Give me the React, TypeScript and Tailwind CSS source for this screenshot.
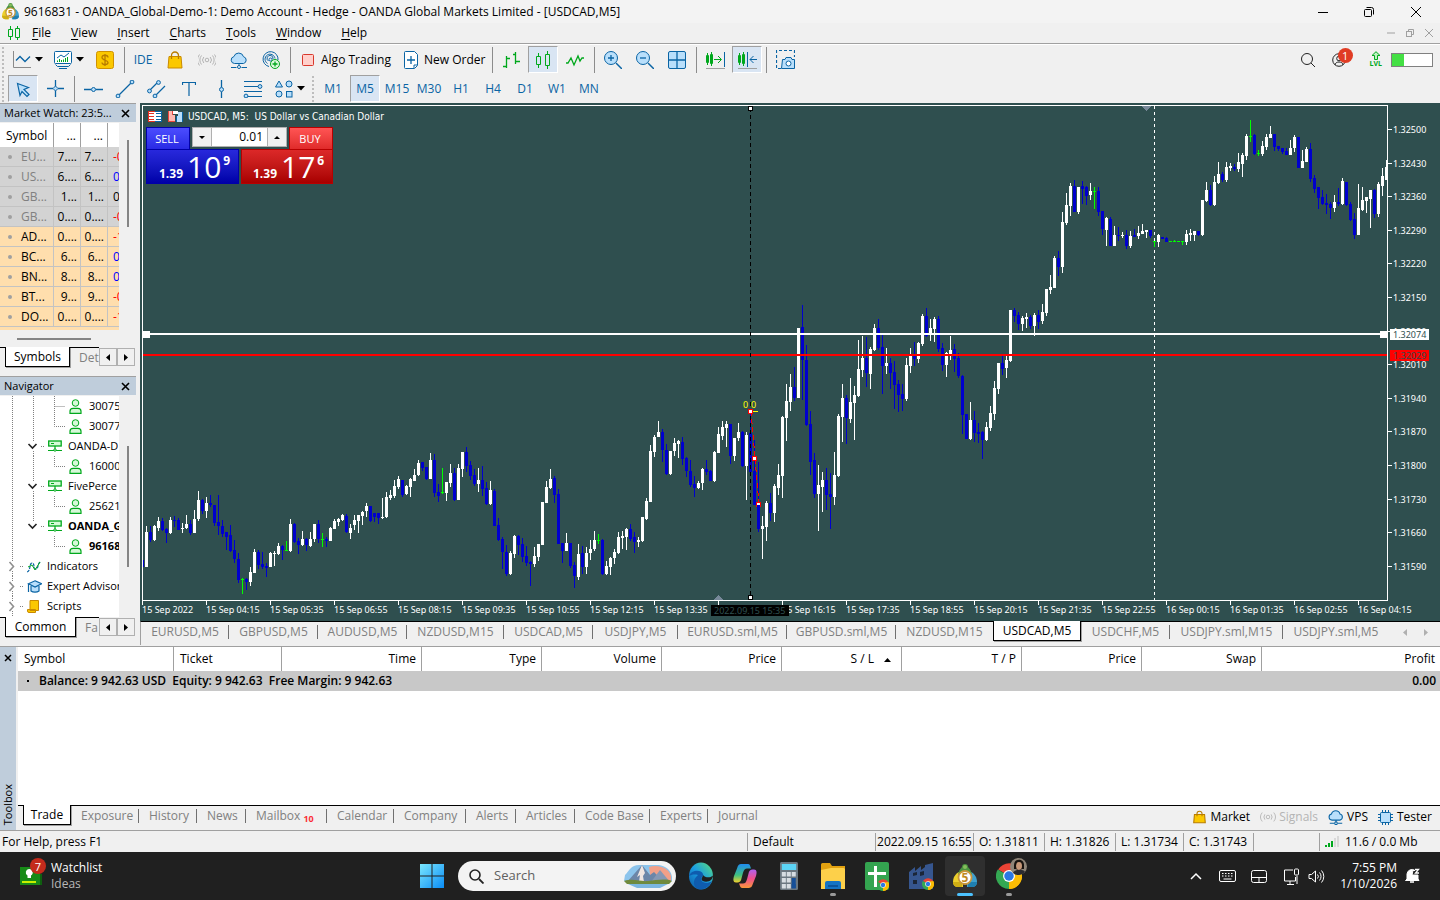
import type { ReactNode } from "react";

const BLUE = "#0a64a4";
const SKY = "#b9dffb";
const GREEN = "#00a81c";
const GRAY = "#8a8a8a";

/* Candles: colour (w up, b down, g doji), then high, body top, body bottom, low */
const CANDLES = `
b560,560,567,567 w526,532,567,567 b526,532,540,542 w525,526,540,541 w517,521,528,531 b518,521,530,531 b528,529,533,543 w517,520,533,534
b516,520,521,527 b518,520,530,530 w523,528,529,533 w515,524,528,529 b520,524,533,535 w510,519,533,533 w491,500,519,521 b499,500,511,514
w497,503,511,518 b495,503,505,507 b505,505,523,526 b495,522,526,535 b520,526,534,537 b532,532,537,550 b525,535,551,552 b540,550,559,563
b553,559,580,583 g578,579,579,594 b578,579,582,590 w567,572,582,586 w549,552,573,573 b550,552,565,569 b552,564,567,569 b563,566,568,577
w552,553,567,567 w551,553,554,566 w543,546,554,555 b545,546,550,560 g541,550,550,551 w519,524,551,552 b523,524,542,543 b538,541,545,554
w531,539,545,546 b538,539,545,551 w532,539,546,547 w524,524,539,542 b520,524,539,543 g533,539,539,547 b537,539,541,547 w527,528,541,541
w519,521,529,529 w518,519,522,526 w514,515,520,521 b514,516,532,533 w524,528,533,539 w515,520,525,530 w515,515,521,533 w511,512,516,525
w503,506,511,517 b506,506,521,522 b513,513,517,522 b513,513,518,524 w498,517,518,519 w492,497,517,518 w490,495,498,500 w480,486,496,498
w476,479,487,489 b480,480,495,497 w485,486,494,495 w478,479,487,497 w469,475,481,481 w460,463,475,476 b462,462,468,471 b467,467,479,480
w453,460,479,479 b454,460,493,497 b484,492,496,502 g468,492,492,494 w482,482,493,501 w464,473,483,487 b468,473,500,501 w464,468,500,500
w452,452,469,477 b447,452,466,472 b461,465,476,480 b469,475,484,486 w468,480,484,492 b466,480,489,496 b482,488,504,505 w481,490,504,505
b489,491,526,526 b518,525,540,541 b537,539,552,569 b545,552,574,576 w551,553,574,575 w535,536,554,558 b535,536,545,555 b538,544,557,562
b546,556,563,566 b561,562,564,586 w547,556,564,567 w544,544,557,561 w502,502,545,545 w481,487,503,503 w469,479,488,489 b476,478,495,503
b489,494,544,544 b543,543,551,563 w533,543,551,551 b543,543,566,568 b562,565,576,588 w544,554,577,580 b546,553,567,574 w547,553,567,574
w540,549,553,560 w531,540,549,551 g534,540,540,544 b539,540,574,575 w561,566,574,575 w557,558,567,575 w549,552,558,564 w532,537,553,554
w531,536,538,549 w528,529,537,550 b524,529,539,541 b532,537,542,553 w537,540,542,547 w517,517,541,542 w498,501,519,520 w445,451,502,502
w435,437,452,457 w421,432,437,437 b429,432,450,462 b444,450,474,475 w451,451,474,475 w438,443,451,456 w440,441,444,458 b437,442,459,465
b457,458,471,477 b460,471,485,487 b476,484,488,497 w481,483,488,489 w468,469,483,490 b460,469,472,475 b470,471,481,481 w451,452,481,482
w427,434,453,453 w421,427,436,440 w421,424,428,447 b424,424,456,464 w438,438,456,461 w423,432,438,441 b431,432,466,467 w432,435,466,500
b413,433,472,472 b440,471,505,505 b462,504,529,532 w516,526,529,559 w501,503,527,541 b493,503,513,521 w484,486,513,522 w464,475,488,495
w416,417,476,498 w384,401,418,441 w374,387,402,411 b367,387,398,401 w328,328,398,398 b305,327,360,400 b345,360,425,426 b411,424,462,475
b453,460,494,498 w465,485,494,531 w472,480,487,512 b468,480,495,510 b473,494,497,529 w452,475,497,505 w414,416,476,477 w384,398,417,442
b395,398,418,444 w378,402,419,423 w386,395,403,440 w340,369,396,397 w336,358,370,377 b337,358,373,387 w347,349,374,389 w324,328,350,351
b319,328,348,350 b335,347,366,394 w348,363,366,374 b358,363,373,389 b361,372,385,409 b380,384,395,412 b384,394,399,411 w358,365,399,401
w348,355,366,373 b342,355,359,366 w342,343,359,363 w314,316,344,346 b308,316,336,337 w319,328,335,341 w317,319,329,342 b316,319,349,352
b343,348,365,371 w352,353,365,377 w336,350,354,360 b344,349,359,372 b353,358,376,378 b375,376,415,434 b414,414,439,439 w402,420,439,440
b411,420,433,442 b423,432,434,443 b431,432,440,459 w422,427,440,441 w406,413,428,431 w381,388,414,420 w363,363,389,394 b356,363,369,375
w356,360,368,378 w310,310,361,362 b308,310,316,322 b312,315,324,330 w316,318,324,331 w313,317,319,328 b315,317,326,329 w313,315,326,336
b310,315,322,329 w304,312,321,324 w289,289,313,316 w275,287,290,294 w256,258,288,288 b251,258,267,276 w212,222,267,273 w193,205,223,225
w183,186,206,216 b180,186,212,212 w187,187,212,214 b181,186,189,204 b186,187,196,205 w183,191,195,200 g187,191,191,209 b187,191,212,216
b211,211,229,235 w217,218,230,246 b217,219,246,246 w226,235,246,246 b227,235,236,241 w232,235,236,238 b230,235,246,249 w231,236,246,248
b229,235,237,237 w226,233,236,239 w224,231,234,234 w230,230,232,238 b230,230,236,238 g241,241,241,247 w234,235,242,247 b237,237,239,239
b237,238,242,242 g241,241,241,242 g240,241,241,242 g241,241,241,242 g241,241,241,245 w230,234,242,245 w229,233,235,241 w231,231,235,241
b231,231,235,236 w200,200,235,236 w182,190,201,202 b185,190,205,206 w176,182,205,206 w162,174,183,184 b172,174,180,182 w162,167,180,182
w163,166,168,171 b164,167,169,171 w153,162,169,172 w153,155,164,177 w134,136,156,160 g120,136,136,142 b134,135,154,155 g150,153,153,156
w141,146,154,156 w134,137,147,150 w126,134,138,138 b134,134,147,151 b146,146,149,151 b148,148,152,154 b148,151,155,155 w140,148,155,155
w135,137,148,152 b137,137,168,168 w150,161,168,168 w147,149,162,162 b143,149,179,182 b175,178,189,193 b187,187,198,209 b190,197,204,205
b194,203,205,214 b202,204,208,219 w195,202,208,212 b188,202,204,206 w178,181,204,205 b182,182,205,206 b202,204,220,221 b213,219,235,239
w184,208,235,235 w187,200,210,211 w197,197,201,213 w190,190,199,228 b189,190,214,218 w182,184,214,217 w168,176,186,196 w160,167,180,180
`.trim().split(/\s+/).map(s => ({ kind: s[0], y: s.slice(1).split(",").map(Number) }));

const FILLS: Record<string, string> = { w: "#ffffff", b: "#0000cd", g: "#00ff00" };

// the empty slot sits under the crosshair date box
const TIMES = [
  "15 Sep 2022", "15 Sep 04:15", "15 Sep 05:35", "15 Sep 06:55", "15 Sep 08:15", "15 Sep 09:35", "15 Sep 10:55",
  "15 Sep 12:15", "15 Sep 13:35", "", "15 Sep 16:15", "15 Sep 17:35", "15 Sep 18:55", "15 Sep 20:15",
  "15 Sep 21:35", "15 Sep 22:55", "16 Sep 00:15", "16 Sep 01:35", "16 Sep 02:55", "16 Sep 04:15",
];
const PRICES = [
  "1.32500", "1.32430", "1.32360", "1.32290", "1.32220", "1.32150", "1.32080",
  "1.32010", "1.31940", "1.31870", "1.31800", "1.31730", "1.31660", "1.31590",
];

const CHART_TABS = [
  { label: "EURUSD,M5", w: "w-[88px]" }, { label: "GBPUSD,M5", w: "w-[89px]" }, { label: "AUDUSD,M5", w: "w-[89px]" },
  { label: "NZDUSD,M15", w: "w-[97px]" }, { label: "USDCAD,M5", w: "w-[89px]" }, { label: "USDJPY,M5", w: "w-[85px]" },
  { label: "EURUSD.sml,M5", w: "w-[109px]" }, { label: "GBPUSD.sml,M5", w: "w-[109px]" }, { label: "NZDUSD,M15", w: "w-[97px]" },
  { label: "USDCAD,M5", w: "w-[88px]", active: true }, { label: "USDCHF,M5", w: "w-[89px]" },
  { label: "USDJPY.sml,M15", w: "w-[113px]" }, { label: "USDJPY.sml,M5", w: "w-[106px]" },
];

const TOOLBOX_TABS = [
  { label: "Exposure", w: "w-[68px]" }, { label: "History", w: "w-[58px]" }, { label: "News", w: "w-[49px]" },
  { label: "Mailbox", w: "w-[81px]", count: 10 }, { label: "Calendar", w: "w-[67px]" }, { label: "Company", w: "w-[72px]" },
  { label: "Alerts", w: "w-[50px]" }, { label: "Articles", w: "w-[59px]" }, { label: "Code Base", w: "w-[75px]" },
  { label: "Experts", w: "w-[58px]" }, { label: "Journal", w: "w-[58px]" },
];

const QUOTES = [
  { s: "EU...", b: "7....", a: "7....", d: "-0", tone: "text-[#ff0000]", dim: true },
  { s: "US...", b: "6....", a: "6....", d: "0", tone: "text-[#0000ff]", dim: true },
  { s: "GB...", b: "1...", a: "1...", d: "0", tone: "text-black", dim: true },
  { s: "GB...", b: "0....", a: "0....", d: "-0", tone: "text-[#ff0000]", dim: true },
  { s: "AD...", b: "0....", a: "0....", d: "-1", tone: "text-[#ff0000]" },
  { s: "BC...", b: "6...", a: "6...", d: "0", tone: "text-[#0000ff]" },
  { s: "BN...", b: "8...", a: "8...", d: "0", tone: "text-[#0000ff]" },
  { s: "BT...", b: "9...", a: "9...", d: "-0", tone: "text-[#ff0000]" },
  { s: "DO...", b: "0....", a: "0....", d: "-1", tone: "text-[#ff0000]" },
];

function Svg({ w = 18, h = 18, children, stroke = BLUE, fill = "none" }: { w?: number; h?: number; children: ReactNode; stroke?: string; fill?: string }) {
  return (
    <svg width={w} height={h} viewBox={`0 0 ${w} ${h}`} fill={fill} stroke={stroke} strokeWidth={1} className="shrink-0" aria-hidden="true">
      {children}
    </svg>
  );
}

const Bag = () => (
  <Svg stroke="#c98a00">
    <path d="M3 5.5h12l1 11.5H2z" fill="#fbc800" />
    <path d="M5.5 8V4.5a3.5 3.5 0 0 1 7 0V8" stroke="#b87c00" strokeWidth={1.3} />
  </Svg>
);
const Signal = () => (
  <Svg stroke="#b4b4b4">
    <circle cx="9" cy="9" r="1.8" />
    <path d="M5.8 6a4.5 4.5 0 0 0 0 6M12.2 6a4.5 4.5 0 0 1 0 6M3.5 4.5a7 7 0 0 0 0 9M14.5 4.5a7 7 0 0 1 0 9M1.500 3.500a9 9 0 0 0 0 11M16.500 3.500a9 9 0 0 1 0 11" />
  </Svg>
);
const Cloud = () => (
  <Svg>
    <path d="M4.5 12.500a3.500 3.500 0 0 1-.6-6.900 5 5 0 0 1 9.600.1 3.500 3.500 0 0 1 0 6.800z" fill={SKY} />
    <path d="M9 12.500v2M1 16.500h5.500M11.500 16.500H17" />
    <circle cx="9" cy="16" r="1.500" fill="#fff" />
  </Svg>
);
const Caret = () => (
  <svg width="8" height="5" viewBox="0 0 8 5" className="shrink-0" aria-hidden="true"><path d="M0 0h8L4 4.500z" fill="#000" /></svg>
);
const Sep = () => <div className="flex h-[26px] w-[6px] shrink-0 justify-center"><div className="w-px bg-[#8c8c8c]" /></div>;
const Grip = () => <div className="mx-[3px] h-[26px] w-[2px] shrink-0 border-l-2 border-dotted border-[#bdbdbd]" />;

function Tool({ label, on, children }: { label: string; on?: boolean; children: ReactNode }) {
  return (
    <button type="button" aria-label={label} className="flex h-[28px] w-8 shrink-0 items-center justify-center text-[12px] text-[#0a64a4]">
      {on ? (
        <span className="flex h-[27px] w-[30px] items-center justify-center border border-b-white border-l-[#a0a0a0] border-r-white border-t-[#a0a0a0] bg-[#d9e5f3]">{children}</span>
      ) : children}
    </button>
  );
}

function Logo({ size }: { size: number }) {
  return (
    <svg width={size} height={size} viewBox="0 0 24 24" className="shrink-0" aria-hidden="true">
      <path d="M6 8c-4 2-6 6-6 10 0 3 2 5 5 5h5V9z" fill="#ecd02c" />
      <path d="M0 18h9v5H5c-3 0-5-2-5-5z" fill="#cfae14" />
      <path d="M18 8c4 2 6 6 6 10 0 3-2 5-5 5h-5V9z" fill="#3fa0cc" />
      <path d="M24 18h-9v5h4c3 0 5-2 5-5z" fill="#1f7fb0" />
      <path d="M12 0c2 0 3 1 3 3 2 2 4 5 4 9H5c0-4 2-7 4-9 0-2 1-3 3-3z" fill="#4a9440" />
      <circle cx="12" cy="3" r="2" fill="#86bd5c" />
      <circle cx="12" cy="13.500" r="6.500" fill="#fff" stroke="#c9973a" strokeWidth="1.800" />
      <text x="12" y="18" fontSize="12" fontWeight="700" textAnchor="middle" fill="#c08a1e">5</text>
    </svg>
  );
}

function TitleBar() {
  return (
    <header className="flex h-[23px] items-center bg-[#f3f3f3] pl-[2px] text-[12px]">
      <Logo size={17} />
      <h1 className="ml-[5px] flex-1 whitespace-nowrap font-normal">9616831 - OANDA_Global-Demo-1: Demo Account - Hedge - OANDA Global Markets Limited - [USDCAD,M5]</h1>
      <div className="flex">
        <button type="button" aria-label="Minimize" className="flex w-[46px] justify-center"><Svg w={12} h={12} stroke="#000"><path d="M1 6.500h10" /></Svg></button>
        <button type="button" aria-label="Restore" className="flex w-[46px] justify-center"><Svg w={12} h={12} stroke="#000"><rect x="1.500" y="3.500" width="7" height="7" rx="1" /><path d="M3.500 1.500h5a2 2 0 0 1 2 2v5" /></Svg></button>
        <button type="button" aria-label="Close" className="flex w-[48px] justify-center"><Svg w={12} h={12} stroke="#000"><path d="M1 1l10 10M11 1L1 11" /></Svg></button>
      </div>
    </header>
  );
}

function MenuBar() {
  return (
    <nav className="flex h-[21px] items-center border-b border-[#a0a0a0] pl-[8px] pr-[6px] text-[12px]">
      <Svg w={12} h={14} stroke={GREEN}><path d="M2.500 0v3M.500 3.500h4v7h-4zM2.500 11v3M9.500 0v2M7.500 2.500h4v9h-4zM9.500 12v2" /></Svg>
      <div className="ml-[12px] flex flex-1 gap-[20px]">
        {["File", "View", "Insert", "Charts", "Tools", "Window", "Help"].map(m => (
          <button key={m} type="button"><span className="underline underline-offset-2">{m[0]}</span>{m.slice(1)}</button>
        ))}
      </div>
      <div className="flex gap-[9px]">
        <button type="button" aria-label="Minimize chart"><Svg w={10} h={10} stroke="#a0a0a0"><path d="M1 5h8" /></Svg></button>
        <button type="button" aria-label="Restore chart"><Svg w={10} h={10} stroke="#a0a0a0"><rect x="1.500" y="3.500" width="5" height="5" /><path d="M3.500 3V1.500h5v5H7" /></Svg></button>
        <button type="button" aria-label="Close chart"><Svg w={10} h={10} stroke="#a0a0a0"><path d="M1 1l8 8M9 1L1 9" /></Svg></button>
      </div>
    </nav>
  );
}

function MainToolbar() {
  return (
    <div className="flex h-[30px] items-center border-t border-white text-[12px]">
      <div className="w-[6px]"><div className="ml-[2px] h-[26px] w-[2px] border-l-2 border-dotted border-[#bdbdbd]" /></div>
      <button type="button" aria-label="New chart" className="flex w-[41px] items-center gap-[4px] pl-[7px]">
        <Svg><path d="M.500 0v16.500H18" stroke={GRAY} /><path d="M3 9.500l4-4 5 5 5-5" strokeWidth={1.3} /></Svg><Caret />
      </button>
      <button type="button" aria-label="Profiles" className="flex w-[41px] items-center gap-[4px] pl-[7px]">
        <Svg><rect x=".500" y=".500" width="17" height="12" rx="1" fill="#fff" /><path d="M1.500 13.500l2 2h11l2-2M5 17.500h8M3 7l4-3 3 2 5-4" /><path d="M3.500 11V9.500M5.500 11V8M7.500 11V9M9.500 11V8.500M11.500 11V7M13.500 11V6" stroke={GREEN} /></Svg><Caret />
      </button>
      <div className="flex w-[33px] justify-center">
        <button type="button" aria-label="Quotes"><Svg stroke="#d09200"><rect x=".500" y=".500" width="17" height="17" rx="2" fill="#fbc800" /><path d="M12 6.500C12 3.500 6 3.500 6 6.500S12 9 12 11.500 6 14.500 6 11.500M9 3v12" stroke="#b87c00" strokeWidth={1.3} /></Svg></button>
      </div>
      <Sep />
      <Tool label="IDE">IDE</Tool>
      <Tool label="Market"><Bag /></Tool>
      <Tool label="Signals"><Signal /></Tool>
      <Tool label="VPS"><Cloud /></Tool>
      <Tool label="Copy trading">
        <Svg><path d="M7 15.500A7.500 7.500 0 1 1 16 9M5.500 12.500a5 5 0 1 1 7.500-5M6.500 10a3 3 0 1 1 4.500-2" /><circle cx="8.500" cy="8.500" r="1.500" /><circle cx="13" cy="13" r="4.500" fill="#dff8df" stroke={GREEN} /><path d="M13 10.500v5M10.500 13h5" stroke={GREEN} strokeWidth={1.3} /></Svg>
      </Tool>
      <Sep />
      <button type="button" className="flex w-[103px] items-center gap-[7px] whitespace-nowrap pl-[9px]">
        <Svg w={12} h={12} stroke="#d8382c"><rect x=".500" y=".500" width="11" height="11" rx="1" fill="#ffd0cb" /></Svg>Algo Trading
      </button>
      <button type="button" className="flex w-[93px] items-center gap-[6px] whitespace-nowrap pl-[8px]">
        <Svg w={14}><path d="M1.500.500h9l3 3v11l-3 3h-9a1 1 0 0 1-1-1v-15a1 1 0 0 1 1-1zM10 17v-3h3" fill="#fff" /><path d="M7 5v8M3 9h8" strokeWidth={1.3} /></Svg>New Order
      </button>
      <Sep />
      <Tool label="Bar chart"><Svg stroke={GREEN}><path d="M4.500 5v12M1 15.500h3M5 7.500h3M13.500 1v12M11 3.500h3M14 10.500h4" strokeWidth={1.3} /></Svg></Tool>
      <Tool label="Candlesticks" on><Svg w={16} stroke={GREEN}><path d="M3.500 2v3M1.500 5.500h4v8h-4zM3.500 14v3M12.500 0v3M10.500 3.500h4v11h-4zM12.500 15v3" /></Svg></Tool>
      <Tool label="Line chart"><Svg stroke={GREEN}><path d="M0 12h2l3-5 3 7 4-9 2 5 2-3h2" strokeWidth={1.3} /></Svg></Tool>
      <Sep />
      <Tool label="Zoom in"><Svg><circle cx="7" cy="7" r="6.500" fill={SKY} /><path d="M12 12l6 6" strokeWidth={1.5} /><path d="M7 4v6M4 7h6" strokeWidth={1.3} /></Svg></Tool>
      <Tool label="Zoom out"><Svg><circle cx="7" cy="7" r="6.500" fill={SKY} /><path d="M12 12l6 6" strokeWidth={1.5} /><path d="M4 7h6" strokeWidth={1.3} /></Svg></Tool>
      <Tool label="Tile windows"><Svg><rect x=".500" y=".500" width="17" height="17" rx="1.500" fill={SKY} /><path d="M9 0v18M0 9h18" strokeWidth={1.3} /></Svg></Tool>
      <Sep />
      <Tool label="Auto scroll"><Svg w={20} stroke={GREEN}><path d="M2.500 2v12M1.500 4.500h2v7h-2zM6.500 1v14M5.500 3.500h2v9h-2zM9 8.500h7M13 5l3.500 3.500L13 12" /><path d="M19.500 1v15" stroke={BLUE} /><path d="M1 17.500h19" stroke="#a0a0a0" /></Svg></Tool>
      <Tool label="Chart shift" on><Svg w={20} stroke={GREEN}><path d="M2.500 2v12M1.500 4.500h2v7h-2zM6.500 1v14M5.500 3.500h2v9h-2z" /><path d="M10.500 1v15M13 8.500h7M16.500 5L13 8.500l3.500 3.500" stroke={BLUE} /><path d="M1 17.500h19" stroke="#a0a0a0" /></Svg></Tool>
      <Sep />
      <Tool label="Screenshot"><Svg w={19} h={19}><path d="M5 18.500H.500V.500h18V7" strokeDasharray="3 2" strokeWidth={1.2} /><path d="M6.500 9.500h2.500l1-2h5l1 2h2.500v9h-13z" fill={SKY} /><circle cx="12.500" cy="13.500" r="2.500" fill="#fff" /></Svg></Tool>
      <div className="ml-auto flex items-center pr-[7px]">
        <button type="button" aria-label="Search"><Svg w={14} h={14} stroke="#222"><circle cx="6" cy="6" r="5.500" /><path d="M10 10l4 4" /></Svg></button>
        <button type="button" aria-label="Account" className="relative ml-[17px] mr-[14px] w-[24px]">
          <Svg w={14} h={14} stroke="#222"><circle cx="7" cy="7" r="6.300" /><circle cx="7" cy="5.500" r="2.300" /><path d="M3 12c0-4 8-4 8 0" /></Svg>
          <span className="absolute -top-[5px] left-[6px] flex h-[15px] w-[15px] items-center justify-center rounded-full bg-[#e03c24] text-[11px] leading-none text-white">1</span>
        </button>
        <button type="button" aria-label="Level" className="mr-[9px] flex flex-col items-center">
          <Svg w={10} h={9} stroke={GREEN}><path d="M1 4.500L5 .700l4 3.800H6.500v4h-3v-4z" fill="#bff2c4" /></Svg>
          <span className="text-[7px] font-bold leading-[8px] text-[#00a81c]">LVL</span>
        </button>
        <div className="h-[14px] w-[42px] border border-[#808080] bg-white"><div className="h-full w-[12px] bg-[#44e044]" /></div>
      </div>
    </div>
  );
}

function DrawToolbar() {
  return (
    <div className="flex h-[29px] items-center">
      <div className="w-[7px]"><div className="ml-[2px] h-[26px] w-[2px] border-l-2 border-dotted border-[#bdbdbd]" /></div>
      <Tool label="Cursor" on><Svg><path d="M3.500 3.500l11 4-4.500 2 5 5-2 2-5-5-2 4z" fill={SKY} strokeWidth={1.2} /></Svg></Tool>
      <Tool label="Crosshair"><Svg w={17} h={17}><path d="M8.500 0v6M8.500 11v6M0 8.500h6M11 8.500h6" strokeWidth={1.3} /><path d="M8.500 6l2.500 2.500-2.500 2.500L6 8.500z" fill={SKY} /></Svg></Tool>
      <Sep />
      <Tool label="Horizontal line"><Svg w={19}><path d="M0 9.500h7M12 9.500h7" strokeWidth={1.3} /><circle cx="9.500" cy="9.500" r="2" fill={SKY} /></Svg></Tool>
      <Tool label="Trend line"><Svg w={20}><path d="M3.500 15.500L16.500 2.500" strokeWidth={1.2} /><circle cx="3" cy="16" r="1.900" fill={SKY} /><circle cx="17" cy="2" r="1.900" fill={SKY} /></Svg></Tool>
      <Tool label="Channel"><Svg w={20}><path d="M3 10L11 2M8 16L18 6" strokeWidth={1.2} /><circle cx="2.500" cy="11" r="1.900" fill={SKY} /><circle cx="11.500" cy="2.500" r="1.900" fill={SKY} /><circle cx="8" cy="16" r="1.900" fill={SKY} /></Svg></Tool>
      <Tool label="Text"><Svg w={14} h={14}><path d="M.500 3V.500h13V3M7 .500V14" strokeWidth={1.2} /></Svg></Tool>
      <Tool label="Vertical line"><Svg><path d="M9.500 0v7M9.500 12v6" strokeWidth={1.3} /><circle cx="9.500" cy="9.500" r="2" fill={SKY} /></Svg></Tool>
      <Tool label="Fibonacci"><Svg w={20}><path d="M1 1.500h18M1 6.500h14M1 11.500h18M5 16.500h14" strokeWidth={1.2} /><circle cx="17" cy="6.500" r="1.900" fill={SKY} /><circle cx="3" cy="16" r="1.900" fill={SKY} /></Svg></Tool>
      <button type="button" aria-label="Objects" className="flex w-[40px] items-center gap-[4px] pl-[6px]">
        <Svg fill={SKY}><path d="M4 1l3.500 6h-7z" /><circle cx="14" cy="4" r="3" /><circle cx="4" cy="14" r="3" /><rect x="11.500" y="11.500" width="5.500" height="5.500" /></Svg><Caret />
      </button>
      <Grip />
      {["M1", "M5", "M15", "M30", "H1", "H4", "D1", "W1", "MN"].map(t => <Tool key={t} label={t} on={t === "M5"}>{t}</Tool>)}
    </div>
  );
}

function PanelTitle({ children }: { children: ReactNode }) {
  return (
    <div className="flex h-[19px] items-center justify-between border-t border-[#a0a0a0] bg-[#bfcddb] pl-[4px] pr-[6px] text-[11px]">
      <h2>{children}</h2>
      <button type="button" aria-label="Close panel"><Svg w={9} h={9} stroke="#000"><path d="M1 1l7 7M8 1L1 8" strokeWidth={1.6} /></Svg></button>
    </div>
  );
}

function PanelTabs({ active, next, w }: { active: string; next: string; w: string }) {
  return (
    <div className="flex h-[21px] text-[12px]">
      <div className="w-[5px] border-t border-black" />
      <button type="button" className={`${w} h-[20px] border border-t-0 border-black bg-white shadow-[1px_1px_0_#a0a0a0]`}>{active}</button>
      <button type="button" className="h-[20px] flex-1 overflow-hidden border-t border-black pl-[9px] text-left text-[#808080]">{next}</button>
      <div className="mr-px flex items-start pt-px">
        {["Scroll left", "Scroll right"].map((l, i) => (
          <button key={l} type="button" aria-label={l} className="flex h-[18px] w-[18px] items-center justify-center border border-[#b0b0b0] bg-[#f0f0f0]">
            <svg width="4" height="7" viewBox="0 0 4 7" aria-hidden="true"><path d={i ? "M0 0l4 3.500L0 7z" : "M4 0L0 3.500 4 7z"} /></svg>
          </button>
        ))}
      </div>
    </div>
  );
}

function MarketWatch() {
  return (
    <section className="h-[273px]">
      <PanelTitle>Market Watch: 23:5...</PanelTitle>
      <div className="flex h-[208px] pt-px">
        <div className="w-[119px] overflow-hidden bg-[#ffdead]">
          <table className="w-[134px] table-fixed border-separate border-spacing-0 text-[12px] leading-[19px]">
            <thead>
              <tr className="h-[24px] bg-white">
                <th className="w-[54px] border-r border-[#a0a0a0] p-0 pl-[6px] text-left font-normal">Symbol</th>
                <th className="w-[27px] border-r border-[#a0a0a0] p-0 pr-[4px] text-right font-normal">...</th>
                <th className="w-[27px] border-r border-[#a0a0a0] p-0 pr-[4px] text-right font-normal">...</th>
                <th />
              </tr>
            </thead>
            <tbody>
              {QUOTES.map((q, i) => (
                <tr key={i} className={q.dim ? "h-[20px] bg-[#d3d3d3]" : "h-[20px] bg-[#ffdead]"}>
                  <td className={`border-b border-r border-[#c3c3c3] p-0 ${q.dim ? "text-[#808080]" : ""}`}>
                    <div className="flex items-center gap-[9px] pl-[8px]">
                      <span className="h-[4px] w-[4px] rounded-full bg-[#a0a0a0]" />{q.s}
                    </div>
                  </td>
                  <td className="border-b border-r border-[#c3c3c3] p-0 pr-[3px] text-right">{q.b}</td>
                  <td className="border-b border-r border-[#c3c3c3] p-0 pr-[3px] text-right">{q.a}</td>
                  <td className={`border-b border-[#c3c3c3] p-0 pl-[5px] ${q.tone}`}>{q.d}</td>
                </tr>
              ))}
            </tbody>
          </table>
        </div>
        <div className="flex flex-1 justify-center pt-[17px]"><div className="h-[87px] w-[2px] bg-[#858585]" /></div>
      </div>
      <div className="h-[17px] pl-[17px] pt-[8px]"><div className="h-[2px] w-[74px] bg-[#858585]" /></div>
      <PanelTabs active="Symbols" next="Det" w="w-[65px]" />
    </section>
  );
}

const GUIDES: Record<string, string> = {
  none: "", line: "M10.500 0v20", tee: "M10.500 0v20M10.500 10.500H21", corner: "M10.500 0v10.500H21",
  open: "M10.500 0v5M10.500 15v5M18 10.500h3", last: "M10.500 0v5M18 10.500h3", close: "M10.500 0v5M10.500 15v5M18 10.500h3",
};

function Guide({ kind }: { kind: string }) {
  return (
    <svg width="21" height="20" viewBox="0 0 21 20" fill="none" className="shrink-0" aria-hidden="true">
      <path d={GUIDES[kind]} stroke="#808080" strokeDasharray="1 1" />
      {(kind === "open" || kind === "last") && <path d="M5.500 8l4 4 4-4" stroke="#222" strokeWidth="1.600" />}
      {kind === "close" && <path d="M7.500 6l4 4.500-4 4.500" stroke="#909090" strokeWidth="1.600" />}
    </svg>
  );
}

const NAV_ICONS: Record<string, ReactNode> = {
  person: <Svg w={13} h={15} stroke={GREEN}><circle cx="6.500" cy="4" r="3.300" fill="#d6f9d8" /><path d="M1 14.300v-2a3 3 0 0 1 3-3h5a3 3 0 0 1 3 3v2z" fill="#d6f9d8" strokeWidth={1.2} /></Svg>,
  server: <Svg w={14} h={12} stroke={GREEN}><rect x=".700" y="1" width="12.500" height="5" fill="#d6f9d8" strokeWidth={1.3} /><path d="M3 3.500h3M7 6v4M0 10.500h14" strokeWidth={1.2} /><circle cx="7" cy="10" r="1.200" fill="#fff" /></Svg>,
  indicators: <Svg w={14} h={13}><path d="M0 12c4-1 2-9 5-9s1 6 4 6 1-7 5-7" stroke={BLUE} strokeDasharray="3 1" strokeWidth={1.2} /><path d="M1 7l4-2 3 5 5-8" stroke={GREEN} /></Svg>,
  advisors: <Svg w={15} h={13}><path d="M4 6v5c2 1.500 6 1.500 8 0V6" fill={SKY} strokeWidth={1.2} /><path d="M8 .800l6.500 3L8 7 1.500 3.800z" fill={SKY} strokeWidth={1.2} /><path d="M1.500 4v8" strokeWidth={1.2} /></Svg>,
  scripts: <Svg w={13} h={13} stroke="#c98a00"><path d="M3 .500h8.500v10H3zM.500 9.500h8v3H2a1.500 1.500 0 0 1-1.500-1.500z" fill="#fbc800" /></Svg>,
};

const TREE = [
  { g: ["line", "line", "tee"], icon: "person", t: "30075" },
  { g: ["line", "line", "corner"], icon: "person", t: "30077" },
  { g: ["line", "open"], icon: "server", t: "OANDA-D" },
  { g: ["line", "line", "corner"], icon: "person", t: "16000" },
  { g: ["line", "open"], icon: "server", t: "FivePerce" },
  { g: ["line", "line", "corner"], icon: "person", t: "25621" },
  { g: ["line", "last"], icon: "server", t: "OANDA_G", bold: true },
  { g: ["line", "none", "corner"], icon: "person", t: "96168", bold: true },
  { g: ["close"], icon: "indicators", t: "Indicators" },
  { g: ["close"], icon: "advisors", t: "Expert Advisors" },
  { g: ["close"], icon: "scripts", t: "Scripts" },
];

function Navigator() {
  return (
    <section>
      <PanelTitle>Navigator</PanelTitle>
      <div className="flex h-[222px] pt-px">
        <ul className="w-[119px] overflow-hidden bg-white pl-[2px] text-[11px]">
          {TREE.map((n, i) => (
            <li key={i} className={`flex h-[20px] items-center whitespace-nowrap ${n.bold ? "font-bold" : ""}`}>
              {n.g.map((k, j) => <Guide key={j} kind={k} />)}
              <span className="ml-[4px] mr-[6px] w-[14px] shrink-0">{NAV_ICONS[n.icon]}</span>
              {n.t}
            </li>
          ))}
        </ul>
        <div className="flex flex-1 justify-center pt-[50px]"><div className="h-[121px] w-[2px] bg-[#858585]" /></div>
      </div>
      <PanelTabs active="Common" next="Fa" w="w-[71px]" />
    </section>
  );
}

function Chart() {
  return (
    <svg viewBox="140 103 1300 518" preserveAspectRatio="xMinYMin slice" className="block h-[518px] w-full font-['Noto_Sans',sans-serif] text-[9px]" role="img" aria-label="USDCAD M5 candlestick chart">
      <clipPath id="plot"><rect x="143" y="106" width="1244" height="494" /></clipPath>
      <g shapeRendering="crispEdges">
        <path d="M1154.500 106V600" stroke="#fff" strokeDasharray="3 3" />
        <g clipPath="url(#plot)">
          {CANDLES.map(({ kind, y }, i) => {
            const x = 141 + i * 4;
            return (
              <g key={i} fill={FILLS[kind]}>
                <rect x={x + 1} y={y[0]} width={1} height={Math.max(1, y[3] - y[0])} />
                <rect x={x} y={y[1]} width={3} height={Math.max(1, y[2] - y[1])} />
              </g>
            );
          })}
        </g>
        <path d="M142 105.500h1245.500V600.500H142.500V105" fill="none" stroke="#fff" />
        <path d="M142 334h1246" stroke="#fff" strokeWidth={2} />
        <path d="M143 355h1244" stroke="#ff0000" strokeWidth={2} />
        <path d="M143 331h7v7h-7zM1380 331h7v7h-7z" fill="#fff" />
        <path d="M751 411L755 458L759 504" stroke="#ff0000" strokeDasharray="5 3" fill="none" />
        <path d="M750.500 108V598" stroke="#000" strokeDasharray="4 3" />
        {[[748, 409], [752, 456], [756, 502]].map(([x, y]) => (
          <g key={y}><rect x={x} y={y} width={5} height={5} fill="#ff0000" /><rect x={x + 1} y={y + 1} width={3} height={3} fill="#fff" /></g>
        ))}
        <path d="M757 505h3v12h-3z" fill="#0000cd" />
        <path d="M753 411.500h5" stroke="#ffff00" />
        <rect x="748.500" y="106.500" width="4" height="4" fill="#fff" stroke="#000" />
        <rect x="748.500" y="595.500" width="4" height="4" fill="#fff" stroke="#000" />
        <path d="M1142 106h9l-4.500 5zM714 600h9l-4.500-5z" fill="#778899" />
        {TIMES.map((_, i) => <path key={i} d={`M${142.5 + i * 64} 601v4`} stroke="#fff" />)}
        {PRICES.map((p, i) => <path key={p} d={`M1388 ${Math.round(129 + i * 33.6) + 0.5}h4`} stroke="#fff" />)}
      </g>
      <g fill="#ffff00"><text x="743" y="408">0</text><text x="751" y="408">0</text></g>
      <g fill="#fff">
        {TIMES.map((t, i) => t && <text key={i} x={142 + i * 64} y="613">{t}</text>)}
        {PRICES.map((p, i) => <text key={p} x="1393" y={Math.round(133 + i * 33.6)}>{p}</text>)}
      </g>
      <rect x="711" y="605" width="78" height="11" />
      <text x="714" y="614" fill="#2f4f4f">2022.09.15 15:35</text>
      <rect x="1390" y="329" width="39" height="11" fill="#fff" />
      <text x="1393" y="338" fill="#2f4f4f">1.32074</text>
      <rect x="1390" y="350" width="39" height="11" fill="#ff0000" />
      <text x="1393" y="359" fill="#2f4f4f">1.32029</text>
    </svg>
  );
}

function OneClick() {
  return (
    <div className="w-[187px] text-white">
      <div className="flex h-[22px]">
        <button type="button" className="w-[44px] border border-b-0 border-[#0000a8] bg-gradient-to-b from-[#4c4cff] to-[#2929e4] pr-[2px] text-[11px] leading-none">SELL</button>
        <div className="mx-[2px] flex h-[20px] flex-1 border border-[#b0b0b0] bg-[#f0f0f0] text-[12px] text-black">
          <button type="button" aria-label="Decrease volume" className="flex w-[18px] items-center justify-center"><svg width="6" height="3" viewBox="0 0 6 3"><path d="M0 0h6L3 3z" /></svg></button>
          <input aria-label="Volume" defaultValue="0.01" className="w-0 flex-1 border-x border-[#b0b0b0] bg-white pr-[4px] text-right outline-none" />
          <button type="button" aria-label="Increase volume" className="flex w-[18px] items-center justify-center"><svg width="6" height="3" viewBox="0 0 6 3"><path d="M0 3h6L3 0z" /></svg></button>
        </div>
        <button type="button" className="w-[44px] border border-b-0 border-[#b80000] bg-gradient-to-b from-[#ff5454] to-[#e02a2a] pr-[2px] text-[11px] leading-none">BUY</button>
      </div>
      <div className="flex h-[35px] gap-[2px]">
        <button type="button" className="flex w-[93px] items-start border border-[#0000a8] bg-gradient-to-b from-[#2828dc] to-[#0000a8] pl-[12px]">
          <span className="mt-[15px] text-[12px] font-bold leading-[18px]">1.39</span>
          <span className="ml-[4px] text-[30px] leading-[34px]">10</span>
          <span className="ml-[2px] mt-[4px] text-[12px] font-bold leading-[14px]">9</span>
        </button>
        <button type="button" className="flex w-[92px] items-start border border-[#b80000] bg-gradient-to-b from-[#dc2828] to-[#a80000] pl-[11px]">
          <span className="mt-[15px] text-[12px] font-bold leading-[18px]">1.39</span>
          <span className="ml-[4px] text-[30px] leading-[34px]">17</span>
          <span className="ml-[2px] mt-[4px] text-[12px] font-bold leading-[14px]">6</span>
        </button>
      </div>
    </div>
  );
}

function ChartWindow() {
  return (
    <main className="min-w-0 flex-1">
      <div className="relative overflow-hidden bg-[#2f4f4f]">
        <Chart />
        <div className="absolute left-[6px] top-[6px]">
          <div className="flex h-[15px] items-center pl-[2px] font-['DejaVu_Sans_Condensed','Noto_Sans',sans-serif] text-[10px] text-white">
            <Svg w={14} h={11} stroke="none"><rect width="14" height="11" fill="#fff" /><path d="M1 2.500h5M1 5.500h5M1 8.500h5" stroke="#e03020" /><path d="M8 2.500h5M8 5.500h5M8 8.500h5" stroke={BLUE} /><path d="M0 0h7v1H0zM0 10h7v1H0zM0 0h1v11H0z" fill="#e03020" /><path d="M7 0h7v1H7zM7 10h7v1H7zM13 0h1v11h-1z" fill={BLUE} /></Svg>
            <span className="ml-[6px] mr-[5px]"><Svg w={15} h={11} stroke="none"><path d="M0 0h5v4h2v7H0z" fill="#ffb9b2" /><path d="M0 0h1v11H0zM0 10h7v1H0zM4 0h1v4H4z" fill="#e8453a" /><path d="M10 1h5v10H8V5h2z" fill={SKY} /><path d="M14 1h1v10h-1zM8 5h1v6H8z" fill={BLUE} /><path d="M5 0h5v3H5z" fill="#fff" /></Svg></span>
            <span className="whitespace-pre">USDCAD, M5:  US Dollar vs Canadian Dollar</span>
          </div>
          <div className="mt-[3px]"><OneClick /></div>
        </div>
      </div>
      <div className="flex h-[24px] border-l border-t border-l-[#a0a0a0] border-t-black text-[12px] text-[#808080]">
        {CHART_TABS.map((t, i) => (
          <button
            key={i}
            type="button"
            className={t.active
              ? `${t.w} -mt-px h-[20px] border border-t-0 border-black bg-white text-black shadow-[1px_1px_0_#a0a0a0]`
              : `${t.w} relative h-[20px]`}
          >
            {t.label}
            {!t.active && i !== 8 && i !== 12 && <span className="absolute right-0 top-[3px] h-[14px] w-px bg-[#707070]" />}
          </button>
        ))}
        <div className="ml-auto flex h-[20px] items-center gap-[17px] pr-[12px]">
          <button type="button" aria-label="Previous charts"><svg width="4" height="7" viewBox="0 0 4 7"><path d="M4 0L0 3.500 4 7z" fill="#b0b0b0" /></svg></button>
          <button type="button" aria-label="Next charts"><svg width="4" height="7" viewBox="0 0 4 7"><path d="M0 0l4 3.500L0 7z" fill="#b0b0b0" /></svg></button>
        </div>
      </div>
    </main>
  );
}

const COLS = [
  { t: "Symbol", w: "w-[156px]", left: true }, { t: "Ticket", w: "w-[108px]", left: true }, { t: "Time", w: "w-[140px]" },
  { t: "Type", w: "w-[120px]" }, { t: "Volume", w: "w-[120px]" }, { t: "Price", w: "w-[120px]" }, { t: "S / L", w: "w-[120px]", sort: true },
  { t: "T / P", w: "w-[120px]" }, { t: "Price", w: "w-[120px]" }, { t: "Swap", w: "w-[120px]" }, { t: "Profit", w: "" },
];

function Toolbox() {
  return (
    <section className="flex h-[185px] border-b border-t border-[#a0a0a0] text-[12px]">
      <div className="flex w-[16px] shrink-0 flex-col items-center justify-between bg-[#bfcddb] pb-[5px] pt-[7px]">
        <button type="button" aria-label="Close toolbox"><Svg w={8} h={8} stroke="#000"><path d="M1 1l6 6M7 1L1 7" strokeWidth={1.5} /></Svg></button>
        <h2 className="rotate-180 text-[11px] leading-[14px] [writing-mode:vertical-rl]">Toolbox</h2>
      </div>
      <div className="ml-[2px] flex flex-1 flex-col">
        <div className="h-[158px] bg-white">
          <table className="w-full table-fixed border-separate border-spacing-0">
            <thead>
              <tr className="h-[24px]">
                {COLS.map((c, i) => (
                  <th key={i} className={`${c.w} p-0 font-normal ${c.left ? "pl-[6px] text-left" : "pr-[5px] text-right"} ${c.w ? "border-r border-[#a0a0a0]" : ""}`}>
                    {c.t}{c.sort && <svg width="7" height="4" viewBox="0 0 7 4" className="ml-[10px] mr-[5px] inline align-middle"><path d="M0 4h7L3.500 0z" /></svg>}
                  </th>
                ))}
              </tr>
            </thead>
            <tbody>
              <tr className="h-[20px] bg-[#c8c8c8] font-semibold leading-[20px]">
                <td colSpan={10} className="p-0 pl-[9px]">
                  <div className="flex items-center gap-[10px] whitespace-pre"><span className="h-[2px] w-[2px] bg-black" />Balance: 9 942.63 USD  Equity: 9 942.63  Free Margin: 9 942.63</div>
                </td>
                <td className="p-0 pr-[4px] text-right">0.00</td>
              </tr>
            </tbody>
          </table>
        </div>
        <div className="flex h-[25px] items-start text-[#808080]">
          <div className="w-[5px] border-t border-black" />
          <button type="button" className="h-[20px] w-[48px] border border-t-0 border-black bg-white text-black shadow-[1px_1px_0_#a0a0a0]">Trade</button>
          <div className="flex flex-1 border-t border-black">
            {TOOLBOX_TABS.map((t, i) => (
              <button key={t.label} type="button" className={`${t.w} relative h-[19px] whitespace-nowrap pl-[10px] text-left`}>
                {t.label}
                {t.count && <sub className="ml-[3px] text-[9px] font-bold text-red-500">{t.count}</sub>}
                {i < 10 && <span className="absolute right-0 top-[3px] h-[14px] w-px bg-[#707070]" />}
              </button>
            ))}
            <div className="ml-auto flex items-center gap-[10px] pr-[8px] pt-[2px] text-black">
              <button type="button" className="flex items-center gap-[4px]"><svg width="13" height="14" viewBox="0 0 18 18" fill="none" stroke="#b87c00" strokeWidth="1.500"><path d="M2 5.500h14l1 11.500H1z" fill="#fbc800" /><path d="M5.500 8V4.500a3.500 3.500 0 0 1 7 0V8" /></svg>Market</button>
              <button type="button" className="flex items-center gap-[3px] text-[#b4b4b4]"><svg width="16" height="16" viewBox="0 0 18 18" fill="none" stroke="#b4b4b4"><circle cx="9" cy="9" r="2" /><path d="M5.500 6a5 5 0 0 0 0 6M12.500 6a5 5 0 0 1 0 6M2.500 4a8 8 0 0 0 0 10M15.500 4a8 8 0 0 1 0 10" /></svg>Signals</button>
              <button type="button" className="flex items-center gap-[3px]"><svg width="16" height="16" viewBox="0 0 18 18" fill="none" stroke={BLUE} strokeWidth="1.200"><path d="M4.500 12.500a3.500 3.500 0 0 1-.6-6.900 5 5 0 0 1 9.600.1 3.500 3.500 0 0 1 0 6.800z" fill={SKY} /><path d="M9 12.500v2M2 16h5M11 16h5" /><circle cx="9" cy="16" r="1.500" fill="#fff" /></svg>VPS</button>
              <button type="button" className="flex items-center gap-[4px]"><Svg w={15} h={15}><path d="M4.500 0v15M7.500 0v15M10.500 0v15M0 4.500h15M0 7.500h15M0 10.500h15" /><rect x="2.500" y="2.500" width="10" height="10" rx="1" fill={SKY} /></Svg>Tester</button>
            </div>
          </div>
        </div>
      </div>
    </section>
  );
}

function StatusBar() {
  const cell = "flex h-[18px] shrink-0 items-center whitespace-nowrap border-l border-[#a0a0a0] pl-[5px]";
  return (
    <footer className="flex h-[21px] items-center text-[12px]">
      <div className="flex-1 pl-[2px]">For Help, press F1</div>
      <div className={`${cell} w-[128px]`}>Default</div>
      <div className="flex h-[18px] w-[98px] shrink-0 items-center justify-center whitespace-nowrap border-l border-[#a0a0a0]">2022.09.15 16:55</div>
      <div className={`${cell} w-[71px]`}>O: 1.31811</div>
      <div className={`${cell} w-[71px]`}>H: 1.31826</div>
      <div className={`${cell} w-[68px]`}>L: 1.31734</div>
      <div className={`${cell} w-[70px]`}>C: 1.31743</div>
      <div className={`${cell} w-[66px]`} />
      <div className={`${cell} w-[121px] gap-[5px]`}>
        <Svg w={15} h={11} stroke="none"><path d="M0 9h2v2H0zM3 7h2v4H3zM6 5h2v6H6z" fill={GREEN} /><path d="M9 2h2v9H9zM12 0h2v11h-2z" fill="#d8d8d8" /></Svg>
        11.6 / 0.0 Mb
      </div>
    </footer>
  );
}

function Chrome({ size = 24 }: { size?: number }) {
  return (
    <svg width={size} height={size} viewBox="0 0 24 24" aria-hidden="true">
      <path d="M12 12L2 6a12 12 0 0 1 20.400 0z" fill="#ea4335" />
      <path d="M12 12l10.400-6A12 12 0 0 1 12 24z" fill="#fbbc04" />
      <path d="M12 12v12A12 12 0 0 1 1.600 6z" fill="#34a853" />
      <path d="M12 6.500h10.600A12 12 0 0 1 12 24l5-9z" fill="#fbbc04" />
      <circle cx="12" cy="12" r="5.500" fill="#fff" /><circle cx="12" cy="12" r="4.400" fill="#2b78e4" />
    </svg>
  );
}

const APPS: { name: string; run?: boolean; art: ReactNode }[] = [
  { name: "Edge", art: <svg width="24" height="28" viewBox="0 -2 24 28"><defs><linearGradient id="edge" x1="0" y1="1" x2="1" y2="0"><stop stopColor="#0c59a4" /><stop offset=".500" stopColor="#1b9de2" /><stop offset="1" stopColor="#5be07a" /></linearGradient></defs><ellipse cx="12" cy="12" rx="12" ry="13.500" fill="url(#edge)" /><path d="M0 12C2 6 12 5 14 10c1 3-2 3-2 5 0 4 7 5 11 2-3 7-9 9-14 8-5-2-6-9 0-14-4-1-7 0-9 1z" fill="#0f5cae" /><path d="M14 11c0 2-1.500 2.500-1.500 4 0 3 7 4 10 .500 1-1.500 1.500-2.500 1.400-4-3 3-8 2-9.900-.500z" fill="#202020" /></svg> },
  { name: "Copilot", art: <svg width="24" height="26" viewBox="0 0 24 24" preserveAspectRatio="none"><defs><linearGradient id="cpa" x1="0" y1="0" x2="0" y2="1"><stop stopColor="#1f8cf0" /><stop offset=".600" stopColor="#3fc080" /><stop offset="1" stopColor="#f4d02c" /></linearGradient><linearGradient id="cpb" x1="0" y1="0" x2="0" y2="1"><stop stopColor="#b060f0" /><stop offset=".500" stopColor="#f0508c" /><stop offset="1" stopColor="#f9963a" /></linearGradient></defs><path d="M8 1h7c2 0 2 2 3 4h-4c-2 0-3 1-4 4l-2 7c-1 2-3 2-5 2-3 0-3-3-2-6l3-7c1-3 2-4 4-4z" fill="url(#cpa)" /><path d="M16 23H9c-2 0-2-2-3-4h4c2 0 3-1 4-4l2-7c1-2 3-2 5-2 3 0 3 3 2 6l-3 7c-1 3-2 4-4 4z" fill="url(#cpb)" /></svg> },
  { name: "Calculator", art: <svg width="18" height="28" viewBox="0 0 20 28" preserveAspectRatio="none"><rect width="20" height="28" rx="1.500" fill="#6b7780" /><rect x="2" y="2" width="16" height="6" fill="#5cd4f6" />{[10, 16, 22].map(y => [2, 7.5, 13].map(x => <rect key={`${x}-${y}`} x={x} y={y} width="4.500" height={x === 13 && y === 16 ? 10 : 4.5} fill={x === 13 && y > 10 ? "#164f98" : "#d7dde2"} />))}</svg> },
  { name: "File Explorer", run: true, art: <svg width="24" height="26" viewBox="0 0 24 26"><path d="M0 1.500A1.500 1.500 0 0 1 1.500 0H9l2 3h13v6H0z" fill="#e2a110" /><path d="M0 7l10-2h12.500A1.500 1.500 0 0 1 24 6.500V26H0z" fill="#fdd04a" /><path d="M4 26v-6a2 2 0 0 1 2-2h12a2 2 0 0 1 2 2v6z" fill="#1473c4" /><path d="M7 22h10v2H7z" fill="#0b549c" /></svg> },
  { name: "Sheets", art: <div className="relative"><svg width="24" height="28" viewBox="0 0 24 28"><rect width="24" height="28" rx="2" fill="#34a450" /><path d="M9 4h3v6h9v3h-9v12H9V13H3v-3h6z" fill="#fff" /></svg><span className="absolute -bottom-px right-0"><Chrome size={12} /></span></div> },
  { name: "Factory", art: <div className="relative"><svg width="25" height="26" viewBox="0 0 25 26"><path d="M0 9l6-5v4l6-5v4l4-3V2l8-2v26H0z" fill="#36568f" /><path d="M4 10l4-1v3l-4 1zM11 9l4-1v4l-4 1zM4 17h4v4H4z" fill="#1b2638" /></svg><span className="absolute -bottom-px right-0"><Chrome size={12} /></span></div> },
  { name: "MetaTrader 5", run: true, art: <Logo size={24} /> },
  { name: "Chrome", run: true, art: <div className="relative"><Chrome size={26} /><svg width="17" height="17" viewBox="0 0 17 17" className="absolute -right-[5px] -top-[5px]"><circle cx="8.500" cy="8.500" r="8.500" fill="#8f8578" /><path d="M4 7c0-7 10-7 10 0v4H4z" fill="#18130f" /><ellipse cx="9" cy="8" rx="3" ry="4" fill="#c79878" /><path d="M6.500 10c1 3 4 3 5 0l-.500 3h-4z" fill="#18130f" /><path d="M3 15c1-4 11-4 12-1a8.500 8.500 0 0 1-12 1z" fill="#2b2b30" /></svg></div> },
];

function Taskbar() {
  return (
    <div className="flex h-[48px] items-center bg-[#202020] text-white">
      <button type="button" className="flex w-[412px] items-center pl-[20px] text-left">
        <span className="relative">
          <svg width="23" height="20" viewBox="0 0 23 20"><path d="M0 1h20v18H0z" fill="#178a17" /><path d="M20 8h2v11h-2z" fill="#0f5f0f" /><path d="M9 3a3.500 3.500 0 0 1 2 6.500V12H7.500V9.500A3.500 3.500 0 0 1 9 3z" fill="#fff" /><path d="M2 15h14v2H2z" fill="#c8ee00" /></svg>
          <span className="absolute -top-[8px] left-[10px] flex h-[16px] w-[16px] items-center justify-center rounded-full bg-[#c42b1c] text-[11px] leading-none">7</span>
        </span>
        <span className="ml-[8px] flex flex-col text-[12px] leading-[16px]"><span>Watchlist</span><span className="text-[#b8b8b8]">Ideas</span></span>
      </button>
      <button type="button" aria-label="Start" className="flex w-[40px] justify-center">
        <svg width="24" height="24" viewBox="0 0 24 24"><defs><linearGradient id="win" x1="0" y1="0" x2="1" y2="1"><stop stopColor="#7be8ff" /><stop offset="1" stopColor="#0a8cf5" /></linearGradient></defs><path d="M0 0h11.500v11.500H0zM12.500 0H24v11.500H12.500zM0 12.500h11.500V24H0zM12.500 12.500H24V24H12.500z" fill="url(#win)" /></svg>
      </button>
      <label className="ml-[6px] flex h-[30px] w-[218px] items-center overflow-hidden rounded-full bg-[#f3f3f3] pl-[11px] pr-[3px]">
        <Svg w={15} h={15} stroke="#222"><circle cx="6" cy="6" r="5" strokeWidth={1.6} /><path d="M10 10l4.500 4.500" strokeWidth={1.8} /></Svg>
        <input type="text" aria-label="Search" placeholder="Search" className="ml-[10px] w-0 flex-1 bg-transparent text-[13px] text-black outline-none placeholder:text-[#606060]" />
        <svg width="50" height="30" viewBox="0 0 50 30" aria-hidden="true"><path d="M2 14C6 10 8 4 16 4h20c6 1 12 4 13 12v4H1z" fill="#8cc4ec" /><path d="M26 6c8-3 20 0 22 9v5H28z" fill="#f2a088" /><path d="M4 21L19 4l8 10 4-3 10 10z" fill="#6c86a8" /><path d="M19 4l3 8-2 3 1 6h-5l1-7-3 2z" fill="#f0e6e2" /><path d="M28 21l9-12 10 12z" fill="#8598b4" /><path d="M1 20c10-3 16 1 24 0s18-3 24 0l-3 3H4z" fill="#6f8a3e" /><path d="M5 23h40l-8 4H14z" fill="#7bb6e0" /></svg>
      </label>
      <div className="ml-[3px] flex">
        {APPS.map(a => {
          const active = a.name === "MetaTrader 5";
          return (
            <button key={a.name} type="button" aria-label={a.name} className={`relative mx-[2px] flex h-[40px] w-[40px] items-center justify-center rounded ${active ? "bg-[#2f2f2f]" : ""}`}>
              {a.art}
              {a.run && <span className={`absolute bottom-0 h-[3px] rounded-full ${active ? "w-[16px] bg-[#4cc2ff]" : "w-[6px] bg-[#9a9a9a]"}`} />}
            </button>
          );
        })}
      </div>
      <div className="ml-auto flex items-center pr-[20px]">
        <button type="button" aria-label="Hidden icons" className="mr-[17px]"><Svg w={12} h={8} stroke="#fff"><path d="M1 7l5-5 5 5" strokeWidth={1.5} /></Svg></button>
        <button type="button" aria-label="Keyboard" className="mr-[15px]"><Svg w={17} h={13} stroke="#fff"><rect x=".500" y=".500" width="16" height="11" rx="1.500" /><path d="M3 3.500h11M3 6h11" strokeDasharray="1.500 1.500" /><path d="M4.500 9h8" /></Svg></button>
        <button type="button" aria-label="Touchpad" className="mr-[16px]"><Svg w={16} h={13} stroke="#fff"><rect x=".500" y=".500" width="15" height="12" rx="2" /><path d="M1 7.500h14M8 7.500V12" /></Svg></button>
        <button type="button" aria-label="Network and volume" className="mr-[15px] flex gap-[8px]">
          <Svg w={17} h={17} stroke="#fff"><path d="M10 2H1.500v11h11V9M4 16.500h7M7 13v3M14 8v8" /><rect x="11.500" y="1" width="4" height="6" rx="1" /></Svg>
          <Svg w={17} h={17} stroke="#fff"><path d="M1 6.500h2.500L7.500 3v11l-4-3.500H1zM9.500 6.500a3 3 0 0 1 0 4M11.500 4.500a6 6 0 0 1 0 8M13.500 2.500a9 9 0 0 1 0 12" /></Svg>
        </button>
        <button type="button" className="mr-[8px] flex flex-col text-right text-[12px] leading-[16px]"><span>7:55 PM</span><span>1/10/2026</span></button>
        <button type="button" aria-label="Notifications"><Svg w={15} h={16} stroke="#fff"><path d="M2 11V6a5 5 0 0 1 8-3.500h-2L7 7h6v4l1 1.500H.500z" fill="#fff" /><path d="M10 1.500h3.500L10.500 5h3.500M5 14h4" strokeWidth={1.3} /></Svg></button>
      </div>
    </div>
  );
}

export default function App() {
  return (
    <div className="min-h-screen w-full overflow-hidden bg-[#f0f0f0] font-['Open_Sans','Noto_Sans',sans-serif] text-black">
      <TitleBar />
      <MenuBar />
      <MainToolbar />
      <DrawToolbar />
      <div className="flex">
        <aside className="mr-[4px] w-[136px] shrink-0">
          <MarketWatch />
          <Navigator />
        </aside>
        <ChartWindow />
      </div>
      <div className="h-px" />
      <Toolbox />
      <StatusBar />
      <Taskbar />
    </div>
  );
}
